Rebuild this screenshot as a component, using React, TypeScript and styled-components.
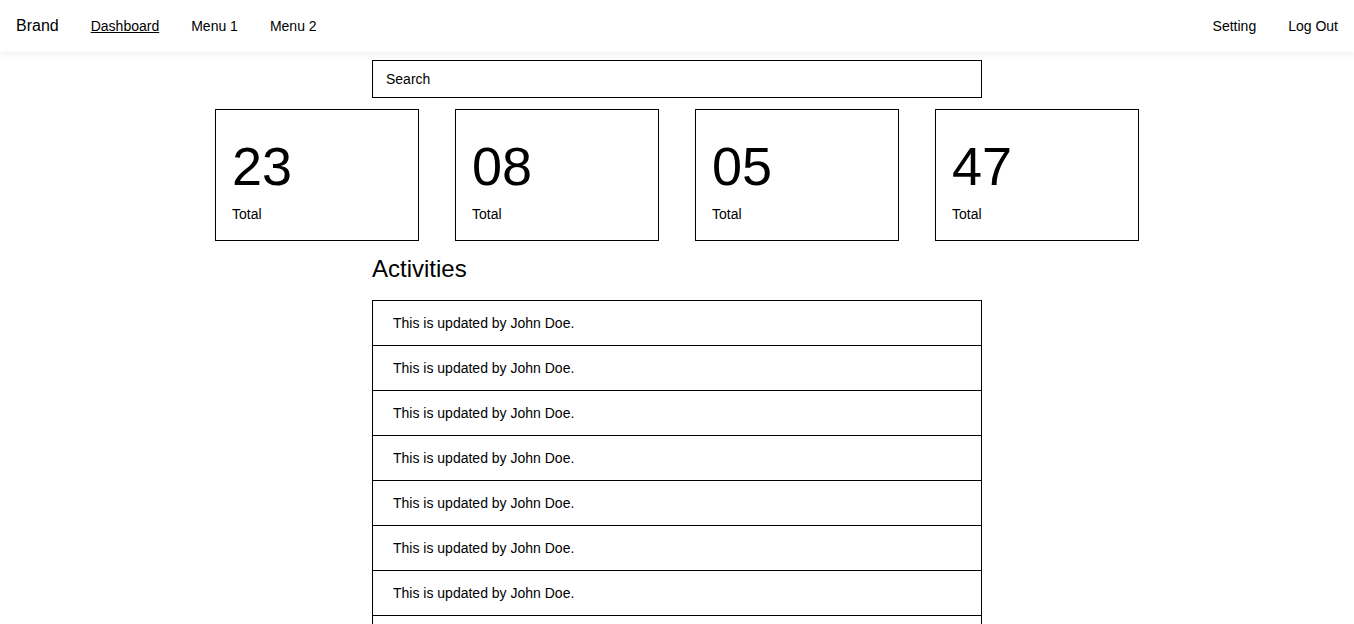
import React from "react";
import styled, { createGlobalStyle } from "styled-components";

const GlobalStyle = createGlobalStyle`
  * { box-sizing: border-box; }
  html, body { margin: 0; padding: 0; background: #fff; }
  body {
    font-family: "Liberation Sans", Arial, sans-serif;
    color: #000;
  }
`;

const NavBar = styled.nav`
  height: 52px;
  display: flex;
  align-items: center;
  justify-content: space-between;
  padding: 0 16px;
  background: #fff;
  box-shadow: 0 2px 8px rgba(0, 0, 0, 0.07);
  position: relative;
  z-index: 1;
`;

const NavGroup = styled.div`
  display: flex;
  align-items: center;
  gap: 32px;
`;

const Brand = styled.span`
  font-size: 16px;
  line-height: 18px;
`;

const NavLink = styled.a<{ $active?: boolean }>`
  font-size: 14px;
  line-height: 16px;
  color: #000;
  text-decoration: ${(p) => (p.$active ? "underline" : "none")};
  cursor: pointer;
`;

const Main = styled.main`
  display: flex;
  flex-direction: column;
  align-items: center;
  padding-top: 8px;
`;

const SearchInput = styled.input`
  width: 610px;
  height: 38px;
  border: 1px solid #000;
  border-radius: 0;
  padding: 0 13px;
  font-family: "Liberation Sans", Arial, sans-serif;
  font-size: 14px;
  color: #000;
  outline: none;
  &::placeholder { color: #000; opacity: 1; }
`;

const CardRow = styled.div`
  display: flex;
  gap: 36px;
  margin-top: 11px;
`;

const Card = styled.div`
  width: 204px;
  height: 132px;
  border: 1px solid #000;
  padding: 26px 16px 18px;
  display: flex;
  flex-direction: column;
`;

const CardNumber = styled.div`
  font-size: 54px;
  line-height: 60px;
`;

const CardLabel = styled.div`
  font-size: 14px;
  line-height: 16px;
  margin-top: 10px;
`;

const Section = styled.section`
  width: 610px;
  margin-top: 14px;
`;

const SectionTitle = styled.h2`
  margin: 0;
  font-size: 24px;
  font-weight: normal;
  line-height: 28px;
`;

const ActivityList = styled.ul`
  list-style: none;
  margin: 17px 0 0;
  padding: 0;
  border: 1px solid #000;
  border-bottom: none;
`;

const ActivityItem = styled.li`
  padding: 14px 20px;
  font-size: 14px;
  line-height: 16px;
  border-bottom: 1px solid #000;
`;

const stats = ["23", "08", "05", "47"];
const activities = Array.from({ length: 10 }, () => "This is updated by John Doe.");

export default function App() {
  return (
    <>
      <GlobalStyle />
      <NavBar>
        <NavGroup>
          <Brand>Brand</Brand>
          <NavLink $active>Dashboard</NavLink>
          <NavLink>Menu 1</NavLink>
          <NavLink>Menu 2</NavLink>
        </NavGroup>
        <NavGroup>
          <NavLink>Setting</NavLink>
          <NavLink>Log Out</NavLink>
        </NavGroup>
      </NavBar>
      <Main>
        <SearchInput placeholder="Search" />
        <CardRow>
          {stats.map((s, i) => (
            <Card key={i}>
              <CardNumber>{s}</CardNumber>
              <CardLabel>Total</CardLabel>
            </Card>
          ))}
        </CardRow>
        <Section>
          <SectionTitle>Activities</SectionTitle>
          <ActivityList>
            {activities.map((a, i) => (
              <ActivityItem key={i}>{a}</ActivityItem>
            ))}
          </ActivityList>
        </Section>
      </Main>
    </>
  );
}
